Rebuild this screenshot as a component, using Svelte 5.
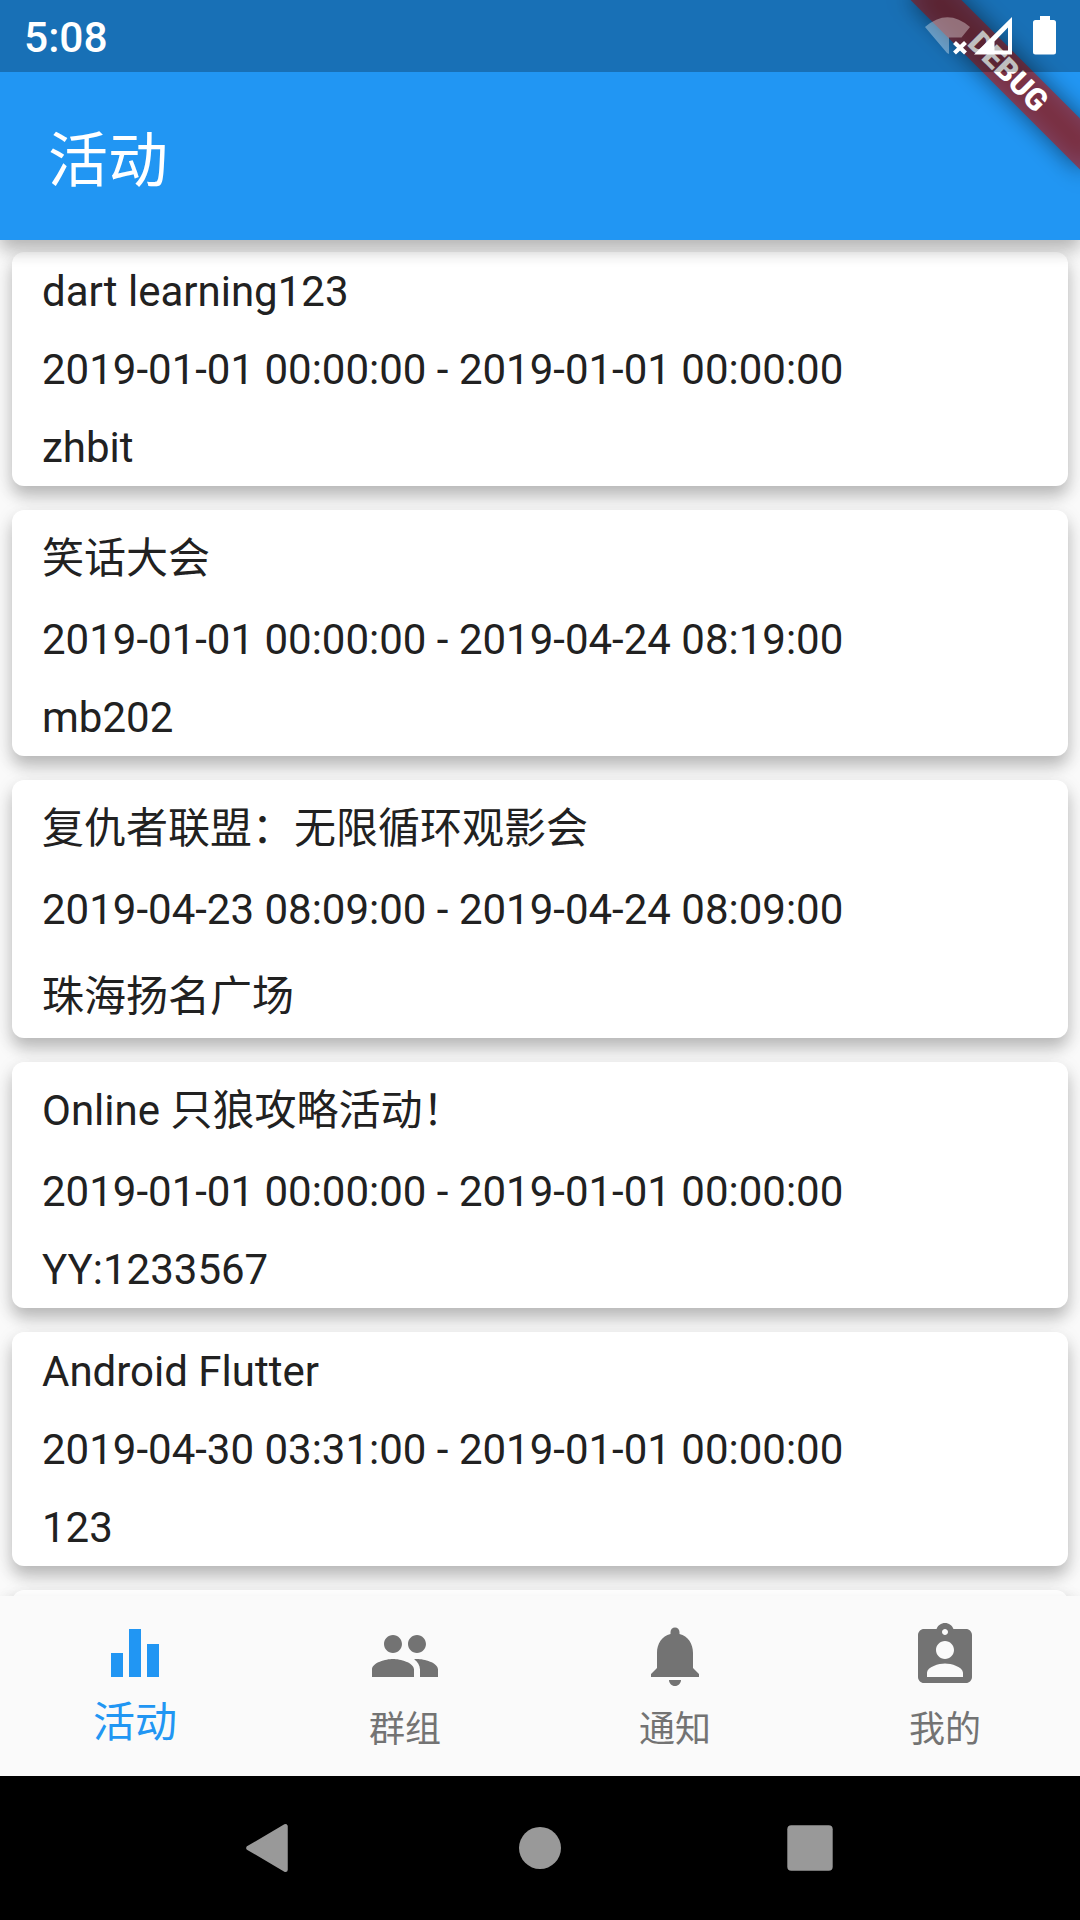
<script>
  const hasCjk = (text) => /[\u3000-\u9fff\uff00-\uffef]/.test(text);

  const activities = [
    { title: 'dart learning123', time: '2019-01-01 00:00:00 - 2019-01-01 00:00:00', place: 'zhbit' },
    { title: '笑话大会', time: '2019-01-01 00:00:00 - 2019-04-24 08:19:00', place: 'mb202' },
    { title: '复仇者联盟：无限循环观影会', time: '2019-04-23 08:09:00 - 2019-04-24 08:09:00', place: '珠海扬名广场' },
    { title: 'Online 只狼攻略活动！', time: '2019-01-01 00:00:00 - 2019-01-01 00:00:00', place: 'YY:1233567' },
    { title: 'Android Flutter', time: '2019-04-30 03:31:00 - 2019-01-01 00:00:00', place: '123' }
  ];

  const tabs = [
    { label: '活动', path: 'M10 20h4V4h-4v16zm-6 0h4v-8H4v8zM16 9v11h4V9h-4z' },
    {
      label: '群组',
      path: 'M16 11c1.66 0 2.99-1.34 2.99-3S17.66 5 16 5c-1.66 0-3 1.34-3 3s1.34 3 3 3zm-8 0c1.66 0 2.99-1.34 2.99-3S9.66 5 8 5C6.34 5 5 6.34 5 8s1.34 3 3 3zm0 2c-2.33 0-7 1.17-7 3.5V19h14v-2.5c0-2.33-4.67-3.5-7-3.5zm8 0c-.29 0-.62.02-.97.05 1.16.84 1.97 1.97 1.97 3.45V19h6v-2.5c0-2.33-4.67-3.5-7-3.5z'
    },
    {
      label: '通知',
      path: 'M12 22c1.1 0 2-.9 2-2h-4c0 1.1.89 2 2 2zm6-6v-5c0-3.07-1.64-5.64-4.5-6.32V4c0-.83-.67-1.5-1.5-1.5s-1.5.67-1.5 1.5v.68C7.63 5.36 6 7.92 6 11v5l-2 2v1h16v-1l-2-2z'
    },
    {
      label: '我的',
      path: 'M19 3h-4.18C14.4 1.84 13.3 1 12 1c-1.3 0-2.4.84-2.82 2H5c-1.1 0-2 .9-2 2v14c0 1.1.9 2 2 2h14c1.1 0 2-.9 2-2V5c0-1.1-.9-2-2-2zm-7 0c.55 0 1 .45 1 1s-.45 1-1 1-1-.45-1-1 .45-1 1-1zm0 4c1.66 0 3 1.34 3 3s-1.34 3-3 3-3-1.34-3-3 1.34-3 3-3zm6 12H6v-1.4c0-2 4-3.1 6-3.1s6 1.1 6 3.1V19z'
    }
  ];

  let selected = $state(0);
</script>

<div class="screen">
  <header class="appbar">
    <h1>活动</h1>
    <div class="banner"><span>DEBUG</span></div>
    <div class="status">
      <span class="clock">5:08</span>
      <svg class="indicators" width="140" height="72" viewBox="920 0 140 72" fill="#fff">
        <path opacity=".35" d="M925 27Q947.500 7.500 970 27L961.500 37.500H949V54L947 53Z" />
        <path d="M954.500 42.500l11 10.500M965.500 42.500l-11 10.500" stroke="#fff" stroke-width="4.200" />
        <path fill-rule="evenodd" d="M1012 17V54.500H974ZM1008 27.500L994.500 41.500V50.500H1008Z" />
        <path d="M1040 16h10v4h3.500q2.500 0 2.500 2.500v29.500q0 2.500-2.500 2.500h-18q-2.500 0-2.500-2.500V22.500q0-2.500 2.500-2.500h4.500z" />
      </svg>
    </div>
  </header>

  <main class="list">
    {#each activities as item}
      <article class="card">
        {#each [item.title, item.time, item.place] as line}
          <p class:cjk={hasCjk(line)}>{line}</p>
        {/each}
      </article>
    {/each}
    <article class="card next"></article>
  </main>

  <nav class="tabs">
    {#each tabs as tab, i}
      <button class:active={i === selected} onclick={() => (selected = i)}>
        <svg width="72" height="72" viewBox="0 0 24 24" fill="currentColor"><path d={tab.path} /></svg>
        <span>{tab.label}</span>
      </button>
    {/each}
  </nav>

  <footer class="system">
    <svg width="54" height="54" viewBox="0 0 54 54"><path d="M5.500 27L42.500 5.300V48.700Z" stroke-width="4.500" stroke-linejoin="round" /></svg>
    <svg width="54" height="54" viewBox="0 0 54 54"><circle cx="27" cy="27" r="21" /></svg>
    <svg width="54" height="54" viewBox="0 0 54 54"><rect x="4.300" y="4.300" width="45.400" height="45.400" rx="4" /></svg>
  </footer>
</div>

<style>
  :global(body) {
    margin: 0;
  }
  .screen {
    width: 1080px;
    height: 1920px;
    display: flex;
    flex-direction: column;
    overflow: hidden;
    background: #fafafa;
    font-family: Roboto, 'Noto Sans CJK SC', sans-serif;
    color: #212121;
  }
  .appbar {
    position: relative;
    z-index: 2;
    flex: none;
    height: 240px;
    box-sizing: border-box;
    padding: 78px 48px 0;
    background: #2196f3;
    color: #fff;
    box-shadow: 0 10px 16px rgba(0, 0, 0, 0.24), 0 4px 24px rgba(0, 0, 0, 0.06);
  }
  h1 {
    margin: 0;
    font-size: 60px;
    font-weight: 400;
    line-height: 168px;
  }
  .status {
    position: absolute;
    inset: 0 0 auto 0;
    height: 72px;
    display: flex;
    align-items: center;
    justify-content: space-between;
    box-sizing: border-box;
    padding: 0 20px 0 24px;
    background: rgba(0, 0, 0, 0.25);
  }
  .clock {
    padding-top: 4px;
    font-size: 42.500px;
    font-weight: 500;
    line-height: 74px;
  }
  .banner {
    position: absolute;
    top: 0;
    right: 0;
    width: 240px;
    height: 240px;
    overflow: hidden;
  }
  /* ribbon centred 102px from the corner along the diagonal */
  .banner::before,
  .banner span {
    position: absolute;
    left: 47.900px;
    top: 54.100px;
    width: 240px;
    height: 36px;
    transform: rotate(45deg);
  }
  .banner::before {
    content: '';
    background: rgba(0, 0, 0, 0.5);
    filter: blur(11.900px);
  }
  .banner span {
    background: rgba(183, 28, 28, 0.627);
    font-size: 30.600px;
    font-weight: 900;
    line-height: 36px;
    text-align: center;
  }
  .list {
    flex: 1;
    min-height: 0;
    overflow: hidden;
    display: flex;
    flex-direction: column;
    gap: 24px;
    padding: 12px 12px 0;
  }
  .card {
    flex: none;
    border-radius: 12px;
    background: #fff;
    box-shadow: 0 10px 16px rgba(0, 0, 0, 0.24), 0 4px 24px rgba(0, 0, 0, 0.06);
  }
  .card p {
    margin: 0;
    padding: 1px 30px 0;
    font-size: 42px;
    line-height: 77px;
    white-space: nowrap;
  }
  .card p.cjk {
    padding-top: 7px;
    line-height: 83px;
  }
  .next {
    height: 234px;
  }
  .tabs {
    position: relative;
    flex: none;
    height: 180px;
    display: grid;
    grid-template-columns: repeat(4, 1fr);
    background: #fafafa;
    box-shadow: 0 0 12px rgba(0, 0, 0, 0.05);
  }
  .tabs button {
    display: flex;
    flex-direction: column;
    align-items: center;
    padding: 24px 0 0;
    border: 0;
    background: none;
    font: inherit;
    font-size: 36px;
    line-height: 48px;
    color: #737373;
  }
  .tabs svg {
    display: block;
  }
  .tabs span {
    margin-top: 14px;
  }
  .tabs .active {
    padding-top: 21px;
    font-size: 42px;
    color: #2196f3;
  }
  .tabs .active span {
    margin-top: 10px;
  }
  .system {
    flex: none;
    height: 144px;
    display: flex;
    align-items: center;
    justify-content: center;
    gap: 216px;
    background: #000;
  }
  .system svg {
    fill: #999;
    stroke: #999;
    stroke-width: 0;
  }
</style>
